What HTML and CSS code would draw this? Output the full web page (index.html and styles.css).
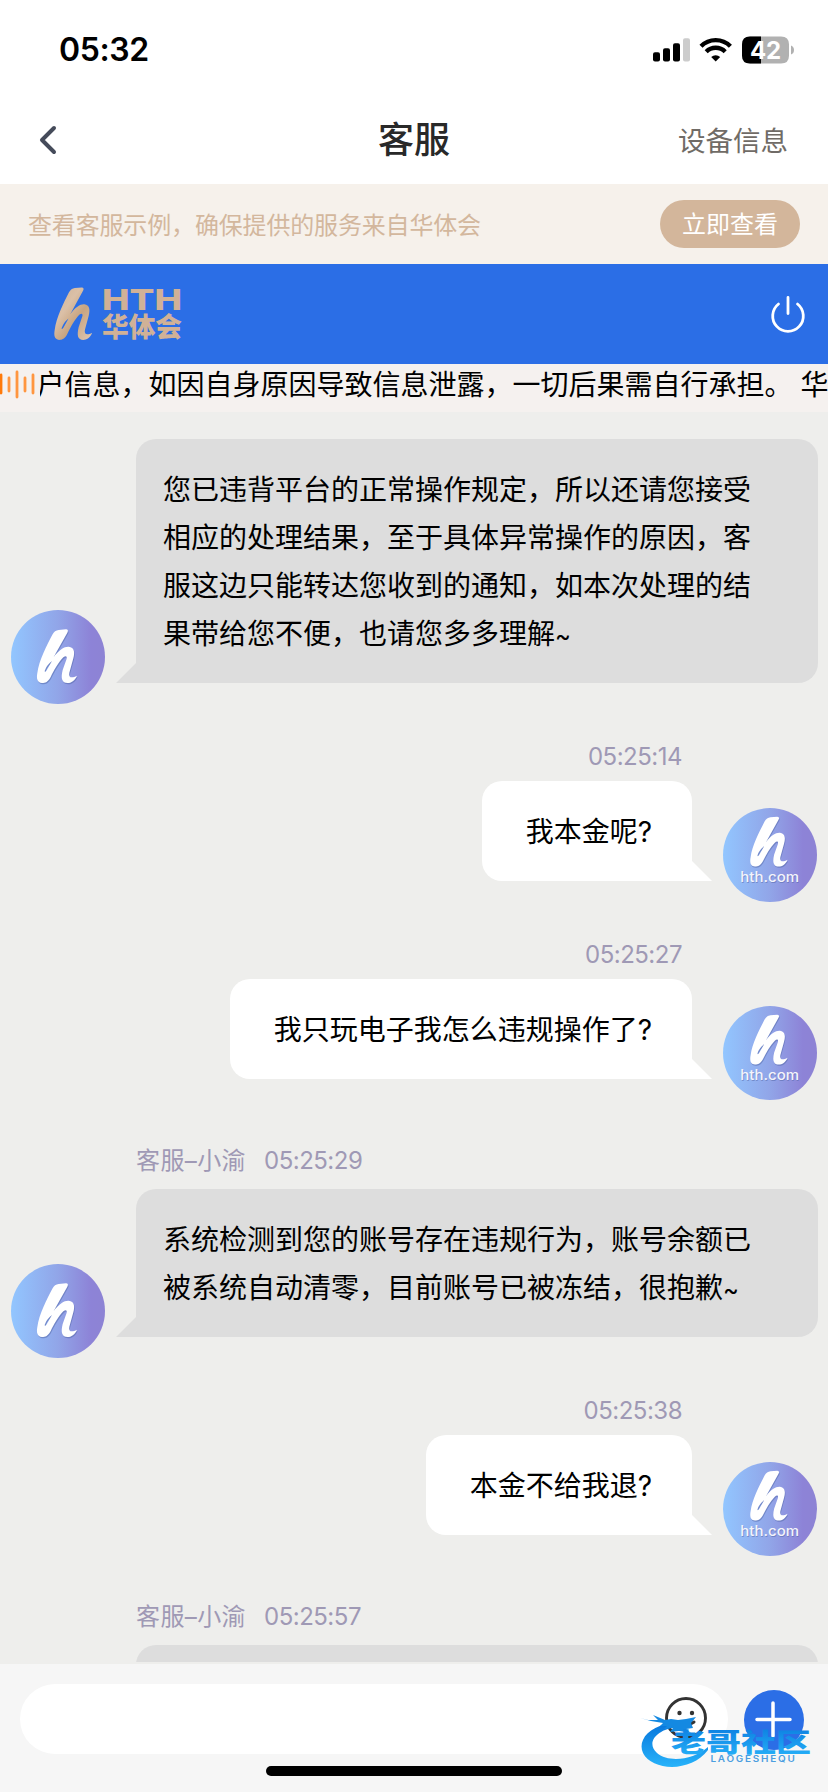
FILE: index.html
```html
<!DOCTYPE html>
<html lang="zh-CN">
<head>
<meta charset="utf-8">
<title>客服</title>
<link rel="stylesheet" href="styles.css">
</head>
<body>
<svg class="defs" width="0" height="0" aria-hidden="true">
  <defs>
    <linearGradient id="sky" x1="0" x2="1" y1="0" y2="0"><stop offset="0" stop-color="#92c6ff"/><stop offset=".5" stop-color="#91a5e8"/><stop offset=".85" stop-color="#8d83d7"/><stop offset="1" stop-color="#8d83d4"/></linearGradient>
    <linearGradient id="gold" x1="0" x2="1" y1="0" y2="1"><stop offset="0" stop-color="#ceb096"/><stop offset=".35" stop-color="#dbc0a7"/><stop offset=".6" stop-color="#c8a581"/><stop offset="1" stop-color="#dfc8b3"/></linearGradient>
    <linearGradient id="wave" x1="0" x2="0" y1="0" y2="1"><stop offset="0" stop-color="#0876dc"/><stop offset="1" stop-color="#27b3fa"/></linearGradient>
    <path id="h" fill-rule="evenodd" d="M143 60L165 58Q174 59 169 68L128 141C145 118 161 109 173 110C190 112 192 126 187 145L175 188C172 203 182 206 198 197C192 212 180 219 170 219C152 219 149 205 155 180L167 146C169 138 164 136 157 142C142 157 129 181 119 201C111 216 103 219 93 219C78 218 76 205 79 189C84 150 108 105 124 74Q131 61 143 60ZM101 183Q102 189 107 181L123 153Q107 165 101 183Z"/>
    <symbol id="avatar-agent" viewBox="0 0 282 282"><circle cx="141" cy="141" r="141" fill="url(#sky)"/><use href="#h" x="2" y="4" fill="#5265a5" opacity=".5"/><use href="#h" fill="#fff"/></symbol>
    <symbol id="avatar-user" viewBox="0 0 282 282"><circle cx="141" cy="141" r="141" fill="url(#sky)"/><g transform="translate(9.4 -28) scale(.93)"><use href="#h" x="2" y="4" fill="#5265a5" opacity=".5"/><use href="#h" fill="#fff"/></g><text x="54" y="226" textLength="176" lengthAdjust="spacingAndGlyphs" class="domain" fill="#5265a5" opacity=".5">hth.com</text><text x="52" y="223" textLength="176" lengthAdjust="spacingAndGlyphs" class="domain" fill="#f4f4fb">hth.com</text></symbol>
  </defs>
</svg>
<div class="screen">
  <header class="status">
    <span class="clock">05:32</span>
    <svg class="status-icons" width="142" height="30" viewBox="0 0 142 30">
      <rect x="0" y="17.3" width="7" height="9.2" rx="2"/><rect x="10" y="13.3" width="7" height="13.2" rx="2"/><rect x="20" y="8.3" width="7" height="18.2" rx="2"/><rect x="30" y="3.3" width="7" height="23.2" rx="2" fill="#ccc"/>
      <g fill="none" stroke="#000" stroke-width="4.3"><path d="M48 11.3a20.6 20.6 0 0 1 29.4 0"/><path d="M53.2 16.7a13.4 13.4 0 0 1 19 0"/></g><path d="M58.2 22a6.7 6.7 0 0 1 9 0l-4.5 4.6z"/>
      <path d="M97 1.5h31q8 0 8 8v11q0 8-8 8h-31q-8 0-8-8v-11q0-8 8-8z" fill="#b1b1b1"/><path d="M108 1.5H97q-8 0-8 8v11q0 8 8 8h11z"/><path d="M138 10.5q3 1 3 4.500t-3 4.500z" fill="#b1b1b1"/>
      <text x="97" y="23.500" class="battery" textLength="31" fill="#fff">42</text>
    </svg>
  </header>
  <nav class="nav">
    <svg class="back" width="24" height="34" viewBox="0 0 24 34"><path d="M16 5L4 17l12 12" fill="none" stroke="#454b5a" stroke-width="4" stroke-linecap="round" stroke-linejoin="round"/></svg>
    <h1 class="title">客服</h1>
    <span class="device">设备信息</span>
  </nav>
  <section class="banner"><span>查看客服示例，确保提供的服务来自华体会</span><button class="check">立即查看</button></section>
  <section class="brand">
    <svg width="134" height="68" viewBox="0 -4 134 68"><g transform="translate(-20.2 -15.5) scale(.315 .326)"><use href="#h" fill="url(#gold)"/></g><text x="52" y="25.500" textLength="80" lengthAdjust="spacingAndGlyphs" class="latin">HTH</text><text x="52" y="53" textLength="80" lengthAdjust="spacingAndGlyphs" class="cjk">华体会</text></svg>
    <svg width="36" height="40" viewBox="0 0 36 40" fill="none" stroke="#fff" stroke-width="2.800" stroke-linecap="round"><path d="M8.500 10a15.300 15.300 0 1 0 19 0M18 3.500v16"/></svg>
  </section>
  <section class="notice">
    <svg width="40" height="32" viewBox="0 0 40 32" stroke="#ff9640" stroke-width="2.800" stroke-linecap="round"><path d="M1 7v18" stroke="#ff7a0a"/><path d="M9 10v13M17 4v25M25 10v13M33 7v18"/></svg>
    <div class="ticker"><span>户信息，如因自身原因导致信息泄露，一切后果需自行承担。 华</span></div>
  </section>
  <main class="chat">
    <article class="message agent first"><div class="row"><svg class="avatar"><use href="#avatar-agent"/></svg><p class="bubble">您已违背平台的正常操作规定，所以还请您接受<br>相应的处理结果，至于具体异常操作的原因，客<br>服这边只能转达您收到的通知，如本次处理的结<br>果带给您不便，也请您多多理解<span class="tilde">~</span></p></div></article>
    <article class="message user"><div class="meta"><time>05:25:14</time></div><div class="row"><p class="bubble">我本金呢?</p><svg class="avatar"><use href="#avatar-user"/></svg></div></article>
    <article class="message user"><div class="meta"><time>05:25:27</time></div><div class="row"><p class="bubble">我只玩电子我怎么违规操作了?</p><svg class="avatar"><use href="#avatar-user"/></svg></div></article>
    <article class="message agent"><div class="meta"><span>客服–小渝</span><time>05:25:29</time></div><div class="row"><svg class="avatar"><use href="#avatar-agent"/></svg><p class="bubble">系统检测到您的账号存在违规行为，账号余额已<br>被系统自动清零，目前账号已被冻结，很抱歉<span class="tilde">~</span></p></div></article>
    <article class="message user"><div class="meta"><time>05:25:38</time></div><div class="row"><p class="bubble">本金不给我退?</p><svg class="avatar"><use href="#avatar-user"/></svg></div></article>
    <article class="message agent"><div class="meta"><span>客服–小渝</span><time>05:25:57</time></div><div class="row next"><p class="bubble"></p></div></article>
  </main>
  <footer class="composer">
    <div class="controls">
      <div class="field"><svg width="44" height="44" viewBox="0 0 44 44"><circle cx="22" cy="22" r="19.500" fill="none" stroke="#333" stroke-width="2.900"/><circle cx="15.500" cy="17" r="2.200" fill="#333"/><circle cx="28" cy="17" r="2.200" fill="#333"/><path d="M14 26q8 6 16 0" fill="none" stroke="#333" stroke-width="3" stroke-linecap="round"/></svg></div>
      <button class="add"><svg width="60" height="60" viewBox="0 0 60 60"><path d="M13 29.500h33M29 13v33" stroke="#fff" stroke-width="3.500" stroke-linecap="round"/></svg></button>
    </div>
    <div class="home"></div>
    <svg class="watermark" width="176" height="60" viewBox="0 0 176 60">
      <path d="M26 10C6 15-2 28 3 39C12 57 51 59 68 36V33C53 46 29 49 17 39C5 28 18 15 37 13Z" fill="url(#wave)"/>
      <path d="M0 4l8 2 10 0-5-5 12 5 6-1 7 1 8-1 10-2-5 6 2 5-7 1 5 4-12-2-9 1 3-4-9 1 3-3-7 0 3-3-12-2z" fill="#1489e2"/>
      <text x="31" y="37.500" class="wm-cjk" textLength="140" lengthAdjust="spacingAndGlyphs" fill="url(#wave)">老哥社区</text>
      <text x="70.500" y="48" class="wm-latin" textLength="86" lengthAdjust="spacingAndGlyphs" fill="#4b9ee0">LAOGESHEQU</text>
    </svg>
  </footer>
</div>
</body>
</html>
```
FILE: styles.css
```css
* { box-sizing: border-box; }
body { margin: 0; background: #fff; color: #000; font-family: Inter, "Noto Sans CJK SC", sans-serif; font-size: 28px; text-spacing-trim: space-all; }
button { border: 0; padding: 0; font: inherit; }
svg { display: block; flex: none; }
.defs { position: absolute; }
.screen { display: flex; flex-direction: column; width: 828px; height: 1792px; overflow: hidden; }
.status { display: flex; flex: none; justify-content: space-between; height: 96px; padding: 32px 33px 0 59px; }
.clock { font-size: 32px; font-weight: 600; line-height: 36px; letter-spacing: -.4px; }
.status-icons { margin-top: 3px; }
.battery { font-family: Inter, sans-serif; font-size: 24px; font-weight: 700; }
.nav { display: grid; flex: none; grid-template-columns: 1fr auto 1fr; align-items: center; height: 88px; padding: 0 40px; }
.back { margin-left: -2px; }
.title { margin: 0; font-size: 36px; font-weight: 500; line-height: 48px; color: #292929; }
.device { justify-self: end; padding-bottom: 2px; font-size: 27.500px; color: #706b66; }
.banner { display: flex; flex: none; align-items: center; justify-content: space-between; height: 80px; padding: 0 28px; background: #f6f1eb; color: #d3b79d; font-size: 24px; }
.banner span { padding-bottom: 2px; letter-spacing: -.16px; }
.check { width: 140px; height: 48px; padding-top: 1px; border-radius: 24px; background: #d3b69b; color: #fff; line-height: 47px; }
.brand { display: flex; flex: none; align-items: center; justify-content: space-between; height: 100px; padding: 0 22px 0 50px; background: #2b6ee6; }
.latin { fill: #d0b197; font-family: Inter, sans-serif; font-size: 29px; font-weight: 800; }
.cjk { fill: #d0b197; font-family: "Noto Sans CJK SC", sans-serif; font-size: 27px; font-weight: 900; }
.notice { display: flex; flex: none; height: 48px; padding-top: 4px; background: #f5f1ef; }
.ticker { flex: 1; overflow: hidden; padding-top: 1px; height: 40px; line-height: 32px; white-space: nowrap; }
.ticker span { display: block; margin-left: -3.500px; }
.chat { flex: none; height: 1250px; overflow: hidden; padding-top: 27px; background: #eeeeec; }
.row { display: flex; align-items: flex-end; justify-content: space-between; padding: 0 10px 0 11px; }
.user .row { justify-content: flex-end; gap: 31px; padding-right: 11px; }
.avatar { width: 94px; height: 94px; margin-bottom: -21px; }
.bubble { position: relative; margin: 0; border-radius: 20px; line-height: 48px; white-space: nowrap; }
.agent .bubble { width: 682px; min-height: 52px; padding: 27px 27px 25px; border-bottom-left-radius: 0; background: #ddd; }
.user .bubble { padding: 27px 40px 25px 44px; border-bottom-right-radius: 0; background: #fff; }
.bubble::after { content: ""; position: absolute; bottom: 0; width: 20px; height: 20px; background: inherit; }
.agent .bubble::after { right: 100%; clip-path: polygon(100% 0, 100% 100%, 0 100%); }
.user .bubble::after { left: 100%; clip-path: polygon(0 0, 100% 100%, 0 100%); }
.tilde { font-size: 24px; line-height: 1; }
.meta { display: flex; color: #9f99b5; font-size: 24px; line-height: 34px; }
.meta time { letter-spacing: -.5px; }
.meta span { letter-spacing: .4px; }
.user .meta { justify-content: flex-end; margin-top: 57px; margin-bottom: 7px; padding-right: 146px; }
.agent .meta { gap: 18px; margin-top: 65px; margin-bottom: 11px; padding-left: 136px; }
.row.next { justify-content: flex-end; }
.domain { font-family: Inter, sans-serif; font-size: 43px; font-weight: 500; }
.composer { position: relative; flex: 1; border-top: 2px solid #eeeeec; background: #f6f6f6; padding: 20px 24px 0 20px; }
.controls { display: flex; gap: 16px; }
.field { display: flex; justify-content: flex-end; width: 708px; height: 70px; padding: 12px 20px 0 0; border-radius: 35px; background: #fff; }
.add { width: 60px; height: 60px; margin-top: 6px; border-radius: 50%; background: #2b6ee6; }
.home { width: 296px; height: 10px; margin: 12px auto 0; border-radius: 5px; background: #000; transform: translateX(2px); }
.watermark { position: absolute; left: 640px; top: 50px; }
.wm-cjk { font-family: "Noto Sans CJK SC", sans-serif; font-size: 26px; font-weight: 900; }
.wm-latin { font-family: Inter, sans-serif; font-size: 8.500px; font-weight: 600; letter-spacing: 1.500px; }
```
